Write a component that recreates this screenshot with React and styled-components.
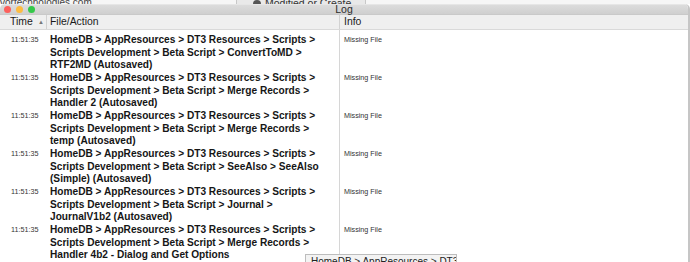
import React from 'react';
import styled, {createGlobalStyle} from 'styled-components';

const GlobalStyle = createGlobalStyle`
  html, body {
    margin: 0;
    padding: 0;
    background: #ffffff;
    overflow: hidden;
  }
  body {
    font-family: "Liberation Sans", Arial, sans-serif;
    color: #1d1d1d;
  }
`;

const Screen = styled.div`
  position: relative;
  width: 690px;
  height: 262px;
  overflow: hidden;
  display: flex;
  flex-direction: column;
`;

const Backdrop = styled.div`
  height: 4px;
  overflow: hidden;
  display: flex;
  align-items: flex-end;
  background: #f6f6f6;
`;

const BackdropText = styled.div`
  font-size: 10px;
  line-height: 10px;
  color: #444;
  margin-bottom: -4px;
  width: ${(p) => p.$w}px;
  flex-shrink: 0;
`;

const BackdropButton = styled.div`
  display: flex;
  align-items: flex-end;
  gap: 4px;
  width: 130px;
  height: 4px;
  padding-left: 16px;
  box-sizing: border-box;
  border-left: 1px solid #c8c8c8;
  border-right: 1px solid #c8c8c8;
  background: #e9e9e9;
  font-size: 10.5px;
  line-height: 10px;
  color: #333;
  flex-shrink: 0;
  & > span {
    margin-bottom: -4px;
  }
`;

const Dot = styled.span`
  width: 8px;
  height: 8px;
  border-radius: 50%;
  background: #555;
  margin-bottom: -4px;
`;

const Window = styled.div`
  flex: 1;
  display: flex;
  flex-direction: column;
  width: 688px;
  border-right: 2px solid #c6c6c6;
  border-top-left-radius: 5px;
  border-top-right-radius: 5px;
  overflow: hidden;
  background: #ffffff;
`;

const TitleBar = styled.div`
  height: 9px;
  position: relative;
  display: flex;
  align-items: flex-end;
  justify-content: center;
  background: linear-gradient(#dcdcdc, #cfcfcf);
  border-top: 1px solid #e6e6e6;
`;

const Lights = styled.div`
  position: absolute;
  left: 4px;
  top: 1px;
  display: flex;
  gap: 5px;
`;

const Light = styled.span`
  width: 7px;
  height: 7px;
  border-radius: 50%;
  background: ${(p) => p.$c};
`;

const Title = styled.div`
  font-size: 10.5px;
  line-height: 9px;
  height: 9px;
  color: #2b2b2b;
`;

const Header = styled.div`
  display: grid;
  grid-template-columns: 47px 293px 1fr;
  height: 14px;
  background: #efefef;
  border-top: 1px solid #c9c9c9;
  border-bottom: 1px solid #d9d9d9;
  font-size: 10.4px;
  line-height: 14px;
  color: #1a1a1a;
`;

const HeadCell = styled.div`
  display: flex;
  align-items: center;
  justify-content: space-between;
  padding-left: ${(p) => p.$pad}px;
  padding-right: 2px;
  border-right: ${(p) => (p.$last ? 'none' : '1px solid #d2d2d2')};
`;

const SortArrow = styled.span`
  font-size: 6px;
  color: #777;
`;

const Body = styled.div`
  flex: 1;
  position: relative;
  display: flex;
  flex-direction: column;
  padding-top: 4px;
  background: linear-gradient(#d6d6d6, #d6d6d6) 339px 0 / 1px 100% no-repeat, #ffffff;
`;

const Row = styled.div`
  display: grid;
  grid-template-columns: 50px 292px 1fr;
  height: 38px;
  flex-shrink: 0;
`;

const SmallCell = styled.div`
  font-size: 7.2px;
  line-height: 9px;
  padding-top: 1px;
  padding-left: ${(p) => p.$pad}px;
  color: #333;
`;

const PathCell = styled.div`
  font-size: 10.15px;
  font-weight: bold;
  line-height: 12.7px;
  color: #161616;
  padding-right: 16px;
`;

const Tooltip = styled.div`
  position: absolute;
  left: 305px;
  top: 254px;
  width: 152px;
  height: 14px;
  box-sizing: border-box;
  padding-left: 5px;
  background: #f3f3f3;
  border: 1px solid #bdbdbd;
  font-size: 10px;
  line-height: 14px;
  color: #222;
  white-space: nowrap;
  overflow: hidden;
`;

const rows = [
  'HomeDB > AppResources > DT3 Resources > Scripts > Scripts Development > Beta Script > ConvertToMD > RTF2MD (Autosaved)',
  'HomeDB > AppResources > DT3 Resources > Scripts > Scripts Development > Beta Script > Merge Records > Handler 2 (Autosaved)',
  'HomeDB > AppResources > DT3 Resources > Scripts > Scripts Development > Beta Script > Merge Records > temp (Autosaved)',
  'HomeDB > AppResources > DT3 Resources > Scripts > Scripts Development > Beta Script > SeeAlso > SeeAlso (Simple) (Autosaved)',
  'HomeDB > AppResources > DT3 Resources > Scripts > Scripts Development > Beta Script > Journal > JournalV1b2 (Autosaved)',
  'HomeDB > AppResources > DT3 Resources > Scripts > Scripts Development > Beta Script > Merge Records > Handler 4b2 - Dialog and Get Options',
];

export default function App() {
  return (
    <Screen>
      <GlobalStyle />
      <Backdrop>
        <BackdropText $w={236}>vortechnologies.com</BackdropText>
        <BackdropButton>
          <Dot />
          <span>Modified or Create...</span>
        </BackdropButton>
      </Backdrop>
      <Window>
        <TitleBar>
          <Lights>
            <Light $c="#fc605c" />
            <Light $c="#fdbc40" />
            <Light $c="#34c84a" />
          </Lights>
          <Title>Log</Title>
        </TitleBar>
        <Header>
          <HeadCell $pad={10}>
            Time <SortArrow>▲</SortArrow>
          </HeadCell>
          <HeadCell $pad={3}>File/Action</HeadCell>
          <HeadCell $pad={4} $last>
            Info
          </HeadCell>
        </Header>
        <Body>
          {rows.map((r, i) => (
            <Row key={i}>
              <SmallCell $pad={11}>11:51:35</SmallCell>
              <PathCell>{r}</PathCell>
              <SmallCell $pad={2}>Missing File</SmallCell>
            </Row>
          ))}
        </Body>
      </Window>
      <Tooltip>HomeDB &gt; AppResources &gt; DT3 Resources</Tooltip>
    </Screen>
  );
}
